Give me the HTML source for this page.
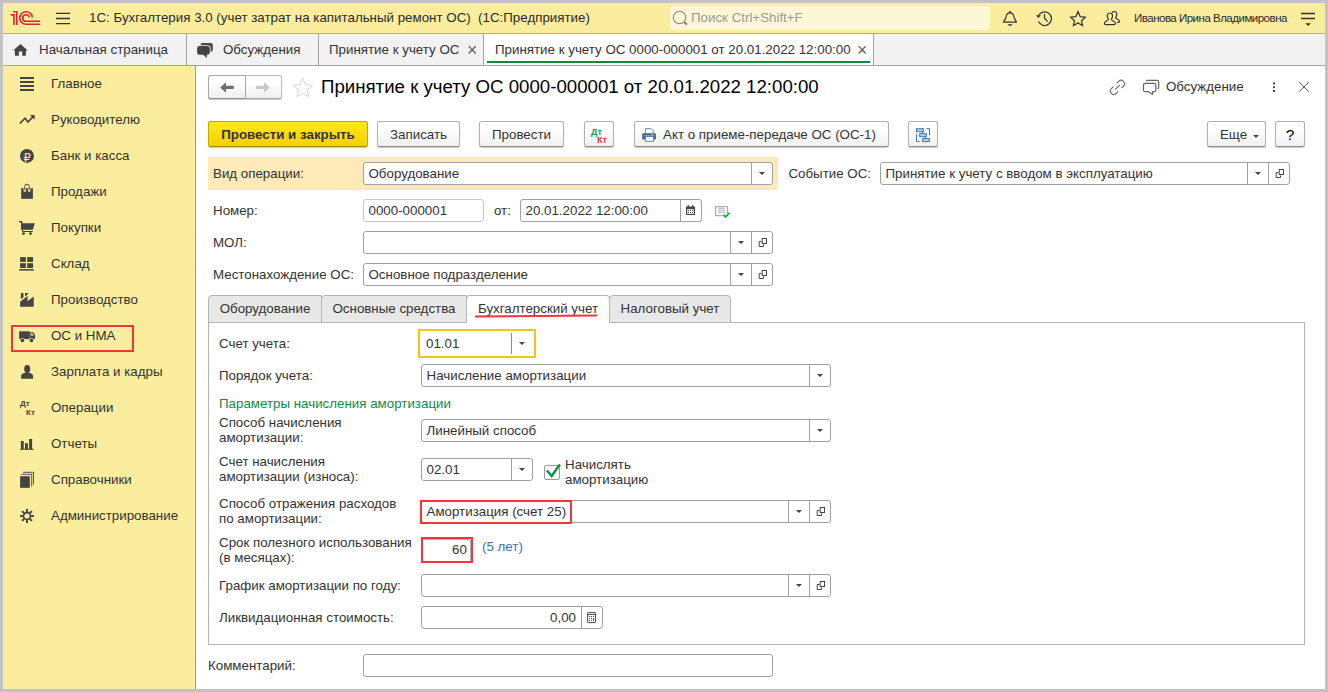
<!DOCTYPE html>
<html lang="ru"><head><meta charset="utf-8"><title>1С: Бухгалтерия 3.0</title>
<style>
*{box-sizing:border-box;margin:0;padding:0}
html,body{width:1328px;height:692px;overflow:hidden;background:#c2c2c2}
body{font-family:"Liberation Sans",Arial,sans-serif;font-size:13.33px;color:#333;position:relative}
.a{position:absolute}
.t{position:absolute;white-space:nowrap;line-height:16px}
#hdr{left:3px;top:3px;width:1322px;height:30px;background:#fbed9e}
#tabs{left:3px;top:33px;width:1322px;height:33px;background:#f2f2f2;border-top:1px solid #b9af75;border-bottom:1px solid #a3a3a3}
#side{left:3px;top:66px;width:193px;height:623px;background:#fbed9e;border-right:1px solid #a89e68}
#main{left:196px;top:66px;width:1129px;height:623px;background:#fff}
.sep{position:absolute;top:34px;width:1px;height:31px;background:#a3a3a3}
.si{position:absolute;left:51px;white-space:nowrap;line-height:16px}
.btn{position:absolute;top:121px;height:26px;border:1px solid #b0b0b0;border-bottom-color:#8e8e8e;border-radius:2.5px;background:linear-gradient(#fff 30%,#efefef);box-shadow:0 1px 1px rgba(0,0,0,.22);line-height:25.2px;text-align:center;white-space:nowrap}
.fld{position:absolute;height:23px;border:1px solid #a0a0a0;border-radius:3px;background:#fff;line-height:21px;padding-left:4.5px;white-space:nowrap}
.fld i{position:absolute;top:0;width:1px;height:21px;background:#a0a0a0}
.fld .s1{right:20px}.fld .s2{right:41px}
.fld b{position:absolute;top:9px;width:0;height:0;border-left:3px solid transparent;border-right:3px solid transparent;border-top:3.5px solid #444}
.fld .a1{right:7.5px}.fld .a2{right:28.5px}
.lb{position:absolute;white-space:nowrap;line-height:15px}
.ptab{position:absolute;top:295px;height:28px;border:1px solid #b4b4b4;background:#e8e8e8;line-height:25.5px;text-align:center;border-radius:4px 4px 0 0}
.ik{position:absolute;font-weight:bold;font-size:8px;line-height:8px;white-space:nowrap}
</style></head><body>
<div id="hdr" class="a"></div>
<div id="tabs" class="a"></div>
<div id="side" class="a"></div>
<div id="main" class="a"></div>

<!-- HEADER -->
<div class="t" style="left:89px;top:10px;color:#2b2b2b">1С: Бухгалтерия 3.0 (учет затрат на капитальный ремонт ОС)&nbsp; (1С:Предприятие)</div>
<div class="a" style="left:670px;top:6px;width:320px;height:24px;background:#fef7d6;border-radius:3px"></div>
<div class="t" style="left:691px;top:10px;color:#999">Поиск Ctrl+Shift+F</div>
<div class="t" style="left:1134px;top:10px;font-size:11.5px;letter-spacing:-0.5px;color:#2b2b2b">Иванова Ирина Владимировна</div>

<!-- TABS -->
<div class="t" style="left:39px;top:42px">Начальная страница</div>
<div class="sep" style="left:186px"></div>
<div class="t" style="left:223px;top:42px">Обсуждения</div>
<div class="sep" style="left:318px"></div>
<div class="t" style="left:329px;top:42px">Принятие к учету ОС</div>
<div class="t" style="left:467px;top:42px;color:#5f5f5f;font-size:17.5px">×</div>
<div class="a" style="left:483px;top:34px;width:391px;height:31px;background:#fff;border-left:1px solid #a3a3a3;border-right:1px solid #a3a3a3"></div>
<div class="a" style="left:487px;top:61px;width:383px;height:2px;background:#048f3e"></div>
<div class="t" style="left:495px;top:42px">Принятие к учету ОС 0000-000001 от 20.01.2022 12:00:00</div>
<div class="t" style="left:857px;top:42px;color:#5f5f5f;font-size:17.5px">×</div>

<!-- SIDEBAR -->
<div class="si" style="top:76px">Главное</div>
<div class="si" style="top:112px">Руководителю</div>
<div class="si" style="top:148px">Банк и касса</div>
<div class="si" style="top:184px">Продажи</div>
<div class="si" style="top:220px">Покупки</div>
<div class="si" style="top:256px">Склад</div>
<div class="si" style="top:292px">Производство</div>
<div class="si" style="top:328px">ОС и НМА</div>
<div class="si" style="top:364px">Зарплата и кадры</div>
<div class="si" style="top:400px">Операции</div>
<div class="si" style="top:436px">Отчеты</div>
<div class="si" style="top:472px">Справочники</div>
<div class="si" style="top:508px">Администрирование</div>
<div class="a" style="left:11px;top:325px;width:123px;height:27px;border:2px solid #f5353a"></div>
<div class="ik" style="left:20px;top:400px;color:#444">Дт</div>
<div class="ik" style="left:26px;top:409.3px;color:#444">Кт</div>

<!-- TITLE ROW -->
<div class="btn" style="left:208px;top:75px;width:74px;height:24px;border-color:#bdbdbd;border-bottom-color:#a8a8a8"></div>
<div class="a" style="left:208px;top:75px;width:38px;height:24px;border:1px solid #a8a8a8;border-bottom-color:#8e8e8e;border-radius:3px 0 0 3px"></div>
<div class="t" style="left:321px;top:75px;font-size:18.67px;line-height:24px;color:#000">Принятие к учету ОС 0000-000001 от 20.01.2022 12:00:00</div>
<div class="t" style="left:1166px;top:79px">Обсуждение</div>

<!-- COMMAND BAR -->
<div class="btn" style="left:208px;width:160px;background:linear-gradient(#ffe81a,#f5d000);border-color:#c5a700;border-bottom-color:#a88e00;font-weight:bold;color:#333">Провести и закрыть</div>
<div class="btn" style="left:377px;width:83px">Записать</div>
<div class="btn" style="left:479px;width:85px">Провести</div>
<div class="btn" style="left:584px;width:30px"></div>
<div class="ik" style="left:591px;top:127.5px;font-size:9px;color:#0b9a45">Дт</div>
<div class="ik" style="left:597px;top:135.5px;font-size:9px;color:#e0373f">Кт</div>
<div class="btn" style="left:634px;width:255px;padding-left:16px">Акт о приеме-передаче ОС (ОС-1)</div>
<div class="btn" style="left:908px;width:30px"></div>
<div class="btn" style="left:1207px;width:59px;padding-right:6px">Еще</div>
<div class="a" style="left:1253px;top:135px;width:0;height:0;border-left:3px solid transparent;border-right:3px solid transparent;border-top:3px solid #444"></div>
<div class="btn" style="left:1275px;width:30px;font-size:15.5px;color:#000">?</div>

<!-- FORM TOP -->
<div class="a" style="left:208px;top:157px;width:570px;height:33px;background:#fee9b8"></div>
<div class="lb" style="left:213px;top:166px">Вид операции:</div>
<div class="fld" style="left:363px;top:162px;width:410px">Оборудование<i class="s1"></i><b class="a1"></b></div>
<div class="lb" style="left:788.4px;top:166px">Событие ОС:</div>
<div class="fld" style="left:880px;top:162px;width:410px">Принятие к учету с вводом в эксплуатацию<i class="s1"></i><i class="s2"></i><b class="a2"></b></div>

<div class="lb" style="left:213px;top:203px">Номер:</div>
<div class="fld" style="left:363px;top:199px;width:121px;border-color:#c6c6c6">0000-000001</div>
<div class="lb" style="left:494px;top:203px">от:</div>
<div class="fld" style="left:520px;top:199px;width:182px">20.01.2022 12:00:00<i class="s1"></i></div>

<div class="lb" style="left:213px;top:235px">МОЛ:</div>
<div class="fld" style="left:363px;top:231px;width:410px"><i class="s1"></i><i class="s2"></i><b class="a2"></b></div>

<div class="lb" style="left:213px;top:267px">Местонахождение ОС:</div>
<div class="fld" style="left:363px;top:263px;width:410px">Основное подразделение<i class="s1"></i><i class="s2"></i><b class="a2"></b></div>

<!-- PANEL -->
<div class="a" style="left:208px;top:322px;width:1097px;height:323px;border:1px solid #b4b4b4;background:#fff"></div>
<div class="ptab" style="left:208px;width:114px;border-radius:4px 0 0 0">Оборудование</div>
<div class="ptab" style="left:321px;width:146px;border-radius:4px 0 0 0">Основные средства</div>
<div class="ptab" style="left:609px;width:122px">Налоговый учет</div>
<div class="ptab" style="left:466px;width:144px;background:#fff;border-bottom:none">Бухгалтерский учет</div>
<div class="a" style="left:475px;top:314.5px;width:122px;height:2px;background:#f5353a;transform:rotate(-0.45deg)"></div>

<div class="lb" style="left:219px;top:336px">Счет учета:</div>
<div class="a" style="left:418px;top:329px;width:118px;height:29px;border:2px solid #f7c21c;background:#fff"></div>
<div class="t" style="left:426px;top:335.5px">01.01</div>
<div class="a" style="left:511px;top:333px;width:1px;height:21px;background:#8c8c8c"></div>
<div class="a" style="left:518.5px;top:342px;width:0;height:0;border-left:3px solid transparent;border-right:3px solid transparent;border-top:3.5px solid #444"></div>

<div class="lb" style="left:219px;top:368px">Порядок учета:</div>
<div class="fld" style="left:421px;top:364px;width:410px">Начисление амортизации<i class="s1"></i><b class="a1"></b></div>

<div class="lb" style="left:219px;top:396px;color:#128a41">Параметры начисления амортизации</div>

<div class="lb" style="left:219px;top:415px">Способ начисления<br>амортизации:</div>
<div class="fld" style="left:421px;top:419px;width:410px">Линейный способ<i class="s1"></i><b class="a1"></b></div>

<div class="lb" style="left:219px;top:454px">Счет начисления<br>амортизации (износа):</div>
<div class="fld" style="left:421px;top:458px;width:112px">02.01<i class="s1"></i><b class="a1"></b></div>
<div class="a" style="left:544px;top:465px;width:15.5px;height:14.5px;border:1px solid #9a9a9a;border-radius:2px;background:#fff"></div>
<div class="lb" style="left:565px;top:457px">Начислять<br>амортизацию</div>

<div class="lb" style="left:219px;top:496px">Способ отражения расходов<br>по амортизации:</div>
<div class="fld" style="left:421px;top:500px;width:410px">Амортизация (счет 25)<i class="s1"></i><i class="s2"></i><b class="a2"></b></div>
<div class="a" style="left:420px;top:500px;width:152px;height:24px;border:2px solid #f5353a"></div>

<div class="lb" style="left:219px;top:535px">Срок полезного использования<br>(в месяцах):</div>
<div class="a" style="left:421px;top:537px;width:52px;height:26px;border:2px solid #f5353a;background:#fff"></div><div class="a" style="left:423px;top:539px;width:48px;height:22px;border-top:1px solid #b5b5b5;border-right:1px solid #b5b5b5;border-radius:0 3px 0 0"></div>
<div class="t" style="left:452px;top:542px">60</div>
<div class="lb" style="left:482px;top:539px;color:#3c6fb4">(5 лет)</div>

<div class="lb" style="left:219px;top:578px">График амортизации по году:</div>
<div class="fld" style="left:421px;top:574px;width:410px"><i class="s1"></i><i class="s2"></i><b class="a2"></b></div>

<div class="lb" style="left:219px;top:610px">Ликвидационная стоимость:</div>
<div class="fld" style="left:421px;top:606px;width:182px;text-align:right;padding-right:26px">0,00<i class="s1"></i></div>

<div class="lb" style="left:208px;top:658px">Комментарий:</div>
<div class="fld" style="left:363px;top:654px;width:410px"></div>

<svg class="a" style="left:0;top:0" width="1328" height="692" viewBox="0 0 1328 692">
<!-- logo -->
<g fill="none" stroke="#d9232e" stroke-width="1.6">
<path d="M32.35 17.4 A6.3 6.3 0 1 0 26.05 24.3 H40"/>
<path d="M29.35 17.4 A3.3 3.3 0 1 0 26.05 21.3 H40"/>
<path d="M10.8 14.9 H13.95 V25.1"/>
<path d="M13.2 11.7 H16.8 V25.1"/>
</g>
<!-- hamburger -->
<path d="M56 13.4H70M56 18.5H70M56 23.6H70" stroke="#333" stroke-width="1.3" fill="none"/>
<!-- search -->
<circle cx="679.6" cy="17.4" r="6.2" fill="none" stroke="#8b887a" stroke-width="1.1"/>
<path d="M684.2 22 L687 24.6" stroke="#8b887a" stroke-width="2.2" fill="none"/>
<!-- bell -->
<path d="M1003.7 22.2 V21.5 C1006 19 1006.3 17 1006.6 15 C1006.9 13.4 1008 12.9 1010 12.9 C1012 12.9 1013.1 13.4 1013.4 15 C1013.7 17 1014 19 1016.3 21.5 V22.2 Z" fill="none" stroke="#333" stroke-width="1.2" stroke-linejoin="round"/>
<path d="M1007.3 24.2 H1012.7 C1011.6 25.5 1010.8 25.9 1010 25.9 C1009.2 25.9 1008.4 25.5 1007.3 24.2 Z" fill="#333"/>
<rect x="1009.1" y="11.1" width="1.8" height="1.8" rx="0.5" fill="#333"/>
<!-- history -->
<g fill="none" stroke="#333" stroke-width="1.2">
<path d="M1038.6 15.6 A6.8 6.8 0 1 1 1038.5 21.6"/>
<path d="M1044.5 14 V18.2 L1047.7 21.6"/>
</g>
<path d="M1036 15.2 H1041 L1038.4 17.9 Z" fill="#333"/>
<!-- star -->
<path d="M1078 11.6 L1080.2 16.6 L1085.4 17.1 L1081.5 20.7 L1082.6 25.6 L1078 23 L1073.4 25.6 L1074.5 20.7 L1070.6 17.1 L1075.8 16.6 Z" fill="none" stroke="#333" stroke-width="1.2" stroke-linejoin="miter"/>
<!-- users -->
<g fill="none" stroke="#333" stroke-width="1.2" stroke-linejoin="round" stroke-linecap="round">
<path d="M1112.3 12.6 C1113 11.2 1116.6 10.6 1116.7 14.2 C1116.8 16.6 1115.6 17.4 1115.6 18.2 C1116.8 19.4 1119.6 19.8 1119.6 21.4 C1119.6 22.4 1118.6 22.4 1117.4 22.4"/>
<path d="M1109.9 13 C1107.6 13 1107.2 15.2 1107.3 16.4 C1107.4 18 1108.4 18.8 1108.4 19.6 C1107.4 20.8 1104.4 21.2 1104.4 23.2 C1104.4 24.4 1105 24.6 1106 24.6 H1113.8 C1114.8 24.6 1115.4 24.4 1115.4 23.2 C1115.4 21.2 1112.4 20.8 1111.4 19.6 C1111.4 18.8 1112.4 18 1112.5 16.4 C1112.6 15.2 1112.2 13 1109.9 13 Z"/>
</g>
<!-- right menu -->
<path d="M1301 13.5H1315M1301 18.5H1315" stroke="#333" stroke-width="1.3" fill="none"/>
<path d="M1305.2 23.2 H1311 L1308.1 26 Z" fill="#333"/>

<!-- tab: home -->
<path d="M20.5 44 L27.8 50.6 H25.9 V55.8 H22.2 V51.6 H18.9 V55.8 H14.9 V50.6 H13.1 Z" fill="#444"/>
<!-- tab: discussions -->
<rect x="200.5" y="43" width="12.3" height="8.8" rx="2.2" fill="#444"/>
<rect x="196.3" y="45.2" width="14.3" height="10.4" rx="2.8" fill="#f2f2f2"/>
<path d="M201.5 54 L207.6 59 L207.6 54 Z" fill="#f2f2f2"/>
<rect x="197.1" y="46" width="12.7" height="8.8" rx="2.2" fill="#444"/>
<path d="M202.5 54.3 L206.9 57.9 L206.9 54.3 Z" fill="#444"/>

<!-- sidebar icons -->
<g fill="#444">
<rect x="20" y="77" width="14" height="2"/><rect x="20" y="81" width="14" height="2"/><rect x="20" y="85" width="14" height="2"/><rect x="20" y="89" width="14" height="2"/>
<path d="M30.2 115.1 H34.7 V119.8 Z"/>
</g>
<path d="M19.8 123.5 L25 118.2 L28 122 L33.6 116.2" fill="none" stroke="#444" stroke-width="1.7"/>
<!-- bank -->
<circle cx="27" cy="155.9" r="7" fill="#444"/>
<text x="27.2" y="161.5" font-family="'DejaVu Sans',sans-serif" font-size="11.5" fill="#fbed9e" text-anchor="middle">₽</text>
<!-- sales bag -->
<rect x="21.2" y="188.1" width="11.7" height="10.7" fill="#444"/>
<path d="M24.8 190.6 V186.6 A2.2 2.2 0 0 1 29.2 186.6 V190.6" fill="none" stroke="#fbed9e" stroke-width="2.6" stroke-linecap="round"/>
<rect x="23" y="183" width="8" height="5" fill="#fbed9e"/>
<path d="M24.8 190.3 V186.4 A2.2 2.2 0 0 1 29.2 186.4 V190.3" fill="none" stroke="#444" stroke-width="1"/>
<!-- cart -->
<g fill="#444">
<path d="M21.1 223.2 H34.9 L32.8 229.7 H21.1 Z"/>
<path d="M19 221 H22.2 V222.5 H19 Z"/>
<rect x="21.1" y="221" width="1.2" height="8.7"/>
<rect x="22.1" y="229.5" width="0.9" height="2"/>
<rect x="22.1" y="231" width="10.8" height="1"/>
<circle cx="23.5" cy="233.6" r="1.4"/><circle cx="30.5" cy="233.6" r="1.4"/>
</g>
<!-- warehouse -->
<g fill="#444">
<rect x="20.1" y="257.1" width="5.8" height="4.8"/><rect x="27.2" y="257.1" width="5.9" height="4.8"/>
<rect x="20.1" y="263.2" width="5.8" height="4.8"/><rect x="27.2" y="263.2" width="5.9" height="4.8"/>
<rect x="19.1" y="269.1" width="14.8" height="1.5"/>
</g>
<!-- factory -->
<g fill="#444">
<path d="M20.1 301.8 L27.6 296.1 V301.3 L33.7 296.6 V306.7 H20.1 Z"/>
<path d="M20.9 293.1 H23.5 V297.3 L20.9 299.3 Z"/>
<path d="M25 293.1 H27.9 V294.3 L25 296.4 Z"/>
</g>
<!-- truck -->
<g fill="#444">
<rect x="19.1" y="331.3" width="10.7" height="7.8"/>
<path d="M30.1 332.2 H33 L35 334.6 V339.1 H30.1 Z"/>
</g>
<path d="M30.8 333.5 H32.6 L33.9 335.4 H30.8 Z" fill="#fbed9e"/>
<circle cx="22.4" cy="340.3" r="2.4" fill="#fbed9e"/><circle cx="31.5" cy="340.3" r="2.4" fill="#fbed9e"/>
<circle cx="22.4" cy="340.4" r="1.8" fill="#444"/><circle cx="31.5" cy="340.4" r="1.8" fill="#444"/>
<!-- person -->
<g fill="#444">
<ellipse cx="27.2" cy="369" rx="3" ry="3.9"/>
<path d="M21.1 378.7 V376.2 C21.1 373.8 24 373.4 25.6 372.6 H28.8 C30.4 373.4 33.1 373.8 33.1 376.2 V378.7 Z"/>
</g>
<!-- reports -->
<g fill="#444">
<rect x="20.9" y="441" width="2.8" height="8.2"/><rect x="25" y="443.2" width="2.9" height="6"/><rect x="29.1" y="439" width="3" height="10.2"/>
<rect x="20.1" y="448.8" width="13.8" height="1"/>
</g>
<!-- books -->
<rect x="20.1" y="476.2" width="9.7" height="11.6" fill="#444"/>
<path d="M21.3 474.3 H31.7 V486.6 M23.1 472.3 H33.5 V484.5" fill="none" stroke="#444" stroke-width="0.9"/>
<!-- gear -->
<circle cx="27" cy="516" r="3.5" fill="none" stroke="#444" stroke-width="1.8"/>
<path d="M27 509.1V511.8M27 520.2V522.9M20.1 516H22.8M31.2 516H33.9M22.1 511.1L24 513M30 519L31.9 520.9M22.1 520.9L24 519M30 513L31.9 511.1" stroke="#444" stroke-width="2" fill="none"/>

<!-- nav arrows -->
<path d="M220.1 87.4 L226 82.2 V85.8 H233.8 V89 H226 V92.7 Z" fill="#6e6e6e"/>
<path d="M269.9 87.4 L264 82.2 V85.8 H256 V89 H264 V92.7 Z" fill="#c9c9c9"/>
<!-- fav star -->
<path d="M302.8 78.4 L305.6 84.7 L312 85.4 L307.2 89.9 L308.6 96.5 L302.8 93.1 L297 96.5 L298.4 89.9 L293.6 85.4 L300 84.7 Z" fill="none" stroke="#dcdcdc" stroke-width="1.2"/>
<!-- link -->
<g transform="rotate(-45 1117.4 87.4)" fill="none" stroke="#6a6a6a" stroke-width="1.1">
<path d="M1115 84 H1112.2 A3.4 3.4 0 0 0 1112.2 90.8 H1115"/>
<path d="M1119.8 84 H1122.6 A3.4 3.4 0 0 1 1122.6 90.8 H1119.8"/>
<path d="M1114.1 87.4 H1120.7"/>
</g>
<!-- discussion outline -->
<g fill="none" stroke="#666" stroke-width="1.2" stroke-linejoin="round">
<path d="M1145 83.3 H1154.3 A1.5 1.5 0 0 1 1155.8 84.8 V90.2 A1.5 1.5 0 0 1 1154.3 91.7 H1152.6 V94.6 L1148.6 91.7 H1145 A1.5 1.5 0 0 1 1143.5 90.2 V84.8 A1.5 1.5 0 0 1 1145 83.3 Z"/>
<path d="M1146.4 81.2 A1 1 0 0 1 1147.4 80.4 H1157.2 A1.5 1.5 0 0 1 1158.7 81.9 V87.2 A1.4 1.4 0 0 1 1157.4 88.6"/>
</g>
<!-- more dots -->
<g fill="#444"><rect x="1273" y="82.4" width="2" height="2"/><rect x="1273" y="86.2" width="2" height="2"/><rect x="1273" y="90" width="2" height="2"/></g>
<!-- close -->
<path d="M1299.2 82.1 L1308.8 91.9 M1308.8 82.1 L1299.2 91.9" stroke="#555" stroke-width="1" fill="none"/>

<!-- printer -->
<path d="M645.5 133.5 V128.6 H651 L653.4 131 V133.5" fill="#fff" stroke="#5a7ea6" stroke-width="0.9"/>
<rect x="642.2" y="133.3" width="13.7" height="6.3" rx="1.2" fill="#3d6690"/>
<rect x="644" y="135" width="10.2" height="1.2" fill="#7d9cbd"/>
<rect x="652" y="134" width="1" height="0.9" fill="#fff"/>
<rect x="645.5" y="136.6" width="8" height="4.7" fill="#fff" stroke="#5a7ea6" stroke-width="0.9"/>
<!-- structure -->
<g fill="#b9cfe6" stroke="#3f79a8" stroke-width="1">
<rect x="916.5" y="128.7" width="6.8" height="3"/>
<rect x="919.7" y="133.7" width="6.6" height="3"/>
<rect x="922.6" y="138.6" width="6.8" height="3"/>
</g>
<path d="M922.6 131.7 V133.7 M925 136.7 V138.6 M926.4 128.6 H929.5 V135.4 M916.5 134.2 V141.4 H919.8" fill="none" stroke="#3f79a8" stroke-width="1"/>
<!-- calendar -->
<rect x="686" y="206.4" width="9" height="8.6" rx="0.8" fill="#444"/>
<rect x="687.6" y="205.2" width="1.4" height="2" fill="#444"/><rect x="692" y="205.2" width="1.4" height="2" fill="#444"/>
<rect x="687.2" y="209.2" width="6.6" height="4.7" fill="#fff"/>
<g fill="#444"><rect x="688" y="210" width="1" height="1"/><rect x="690" y="210" width="1" height="1"/><rect x="692" y="210" width="1" height="1"/><rect x="688" y="212" width="1" height="1"/><rect x="690" y="212" width="1" height="1"/><rect x="692" y="212" width="1" height="1"/></g>
<!-- doc posted -->
<rect x="715.6" y="206.7" width="12" height="9" fill="#fff" stroke="#8aa0bc" stroke-width="1"/>
<path d="M718 208.3H725M718 210.3H725M718 212.3H725" stroke="#8aa0bc" stroke-width="0.8"/>
<path d="M723.3 214.8 L725.5 217 L729.6 212.8" fill="none" stroke="#1fb83a" stroke-width="1.8"/>
<!-- calculator icon -->
<rect x="587.6" y="612.6" width="8" height="10" rx="0.6" fill="#fff" stroke="#444" stroke-width="1"/>
<rect x="588" y="614" width="7.2" height="0.9" fill="#444"/>
<g fill="#444"><rect x="589.1" y="616" width="1" height="1"/><rect x="591.1" y="616" width="1" height="1"/><rect x="593.1" y="616" width="1" height="1"/><rect x="589.1" y="618" width="1" height="1"/><rect x="591.1" y="618" width="1" height="1"/><rect x="589.1" y="620" width="1" height="1"/><rect x="591.1" y="620" width="1" height="1"/><rect x="593.1" y="618" width="1" height="3"/></g>
<!-- checkbox check -->
<path d="M546.9 470.5 L551.7 476 L559.8 464.4" fill="none" stroke="#0f8f3f" stroke-width="2.4"/>
<!-- open icons -->
<g fill="none" stroke="#444" stroke-width="1">
<rect x="1279.2" y="169.5" width="4.3" height="5"/><path d="M1278.5 172.5 H1276.2 V177.5 H1280.5 V175.5"/>
<rect x="762.2" y="238.5" width="4.3" height="5"/><path d="M761.5 241.5 H759.2 V246.5 H763.5 V244.5"/>
<rect x="762.2" y="270.5" width="4.3" height="5"/><path d="M761.5 273.5 H759.2 V278.5 H763.5 V276.5"/>
<rect x="820.2" y="507.5" width="4.3" height="5"/><path d="M819.5 510.5 H817.2 V515.5 H821.5 V513.5"/>
<rect x="820.2" y="581.5" width="4.3" height="5"/><path d="M819.5 584.5 H817.2 V589.5 H821.5 V587.5"/>
</g>
</svg>
</body></html>
